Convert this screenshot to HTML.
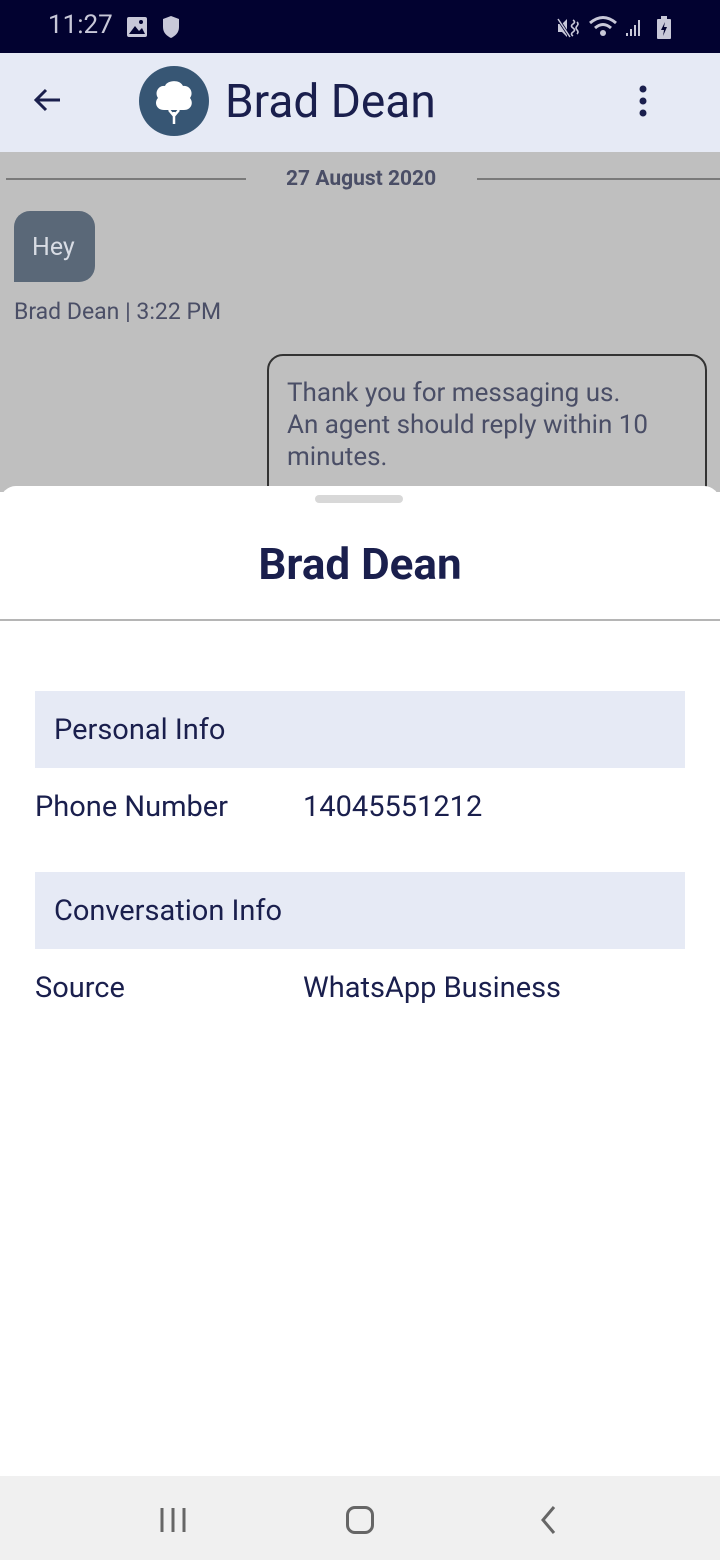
<!DOCTYPE html>
<html><head><meta charset="utf-8"><style>
*{margin:0;padding:0;box-sizing:border-box}
body{width:720px;height:1560px;position:relative;overflow:hidden;font-family:"Roboto","Liberation Sans",sans-serif;background:#fff}
.abs{position:absolute}
</style></head><body>
<div class="abs" style="left:0;top:0;width:720px;height:53px;background:#020230"></div>
<div class="abs" style="left:48px;top:10px;font-size:26px;color:#c8c8d8">11:27</div>
<svg class="abs" style="left:126px;top:16px" width="22" height="22"><rect x="1" y="1" width="20" height="20" rx="2" fill="#c8c8d8"/><path d="M3 18 L9 10 L13 15 L16 12 L19 18Z" fill="#020230"/><circle cx="15" cy="6" r="2" fill="#020230"/></svg>
<svg class="abs" style="left:162px;top:15px" width="18" height="24"><path d="M9 1 L17 4 V12 C17 18 13 21 9 23 C5 21 1 18 1 12 V4Z" fill="#c8c8d8"/></svg>
<svg class="abs" style="left:556px;top:16px" width="26" height="24"><path d="M2 8 H6 L11 3 V21 L6 16 H2Z" fill="#c8c8d8"/><path d="M2 3 L14 21" stroke="#020230" stroke-width="3"/><path d="M2 3 L14 21" stroke="#c8c8d8" stroke-width="1.5"/><path d="M17 4 q3 2 0 4 q-3 2 0 4 q3 2 0 4 q-3 2 0 4 M21 6 q2 2 0 4 q-2 2 0 4 q2 2 0 4" stroke="#c8c8d8" stroke-width="1.6" fill="none"/></svg>
<svg class="abs" style="left:588px;top:14px" width="32" height="26"><path d="M2 9 Q15 -2 28 9" stroke="#c8c8d8" stroke-width="3" fill="none"/><path d="M7 14 Q15 7 23 14" stroke="#c8c8d8" stroke-width="3" fill="none"/><circle cx="15" cy="19" r="3" fill="#c8c8d8"/></svg>
<svg class="abs" style="left:624px;top:18px" width="20" height="20"><path d="M2 18h2v-3h-2zM6 18h2v-7h-2zM10 18h2v-11h-2zM14 18h2v-16h-2z" fill="#c8c8d8"/></svg>
<svg class="abs" style="left:656px;top:16px" width="16" height="24"><rect x="1" y="3" width="14" height="20" rx="1" fill="#c8c8d8"/><rect x="5" y="0" width="6" height="3" fill="#c8c8d8"/><path d="M9 6 L5 14 H8 L7 20 L11 11 H8Z" fill="#020230"/></svg>

<div class="abs" style="left:0;top:53px;width:720px;height:99px;background:#e6eaf5"></div>
<svg class="abs" style="left:32px;top:86px" width="32" height="28"><path d="M28 14 H4 M14 4 L4 14 L14 24" stroke="#1a1f4d" stroke-width="3" fill="none"/></svg>
<div class="abs" style="left:139px;top:66px;width:70px;height:70px;border-radius:50%;background:#375674"></div>
<svg class="abs" style="left:150px;top:76px" width="48" height="50"><path d="M24 36 L24 48 M24 40 L19 34 M24 40 L29 34" stroke="#fff" stroke-width="2.5" fill="none"/><path d="M14 34 C6 34 4 26 8 22 C4 16 9 9 15 10 C17 4 30 3 33 10 C40 9 44 17 40 22 C44 27 41 34 34 34Z" fill="#fff"/></svg>
<div class="abs" style="left:225px;top:75px;font-size:46px;color:#1a1f4d">Brad Dean</div>
<svg class="abs" style="left:636px;top:84px" width="14" height="34"><circle cx="7" cy="5" r="3.5" fill="#1a1f4d"/><circle cx="7" cy="17" r="3.5" fill="#1a1f4d"/><circle cx="7" cy="29" r="3.5" fill="#1a1f4d"/></svg>

<div class="abs" style="left:0;top:152px;width:720px;height:340px;background:#bfbfbf"></div>
<div class="abs" style="left:6px;top:178px;width:240px;height:2px;background:#7a7a7a"></div>
<div class="abs" style="left:477px;top:178px;width:243px;height:2px;background:#7a7a7a"></div>
<div class="abs" style="left:286px;top:167px;font-size:21px;font-weight:bold;color:#4a4e66">27 August 2020</div>
<div class="abs" style="left:14px;top:211px;width:81px;height:71px;background:#5a6878;border-radius:16px 16px 16px 0"></div>
<div class="abs" style="left:32px;top:233px;font-size:25px;color:#d8dce4">Hey</div>
<div class="abs" style="left:14px;top:298px;font-size:23px;color:#4a4e66">Brad Dean | 3:22 PM</div>
<div class="abs" style="left:267px;top:354px;width:440px;height:150px;border:2px solid #333;border-radius:16px"></div>
<div class="abs" style="left:287px;top:377px;font-size:26px;line-height:32px;color:#4a4e66">Thank you for messaging us.<br>An agent should reply within 10<br>minutes.</div>

<div class="abs" style="left:0;top:486px;width:720px;height:990px;background:#fff;border-radius:16px 16px 0 0"></div>
<div class="abs" style="left:315px;top:495px;width:88px;height:8px;border-radius:4px;background:#d8d8d8"></div>
<div class="abs" style="left:0;top:538px;width:720px;text-align:center;font-size:44px;font-weight:bold;color:#1a1f4d">Brad Dean</div>
<div class="abs" style="left:0;top:619px;width:720px;height:2px;background:#b5b5b5"></div>
<div class="abs" style="left:35px;top:691px;width:650px;height:77px;background:#e6eaf5"></div>
<div class="abs" style="left:54px;top:713px;font-size:29px;color:#1a1f4d">Personal Info</div>
<div class="abs" style="left:35px;top:790px;font-size:29px;color:#1a1f4d">Phone Number</div>
<div class="abs" style="left:303px;top:790px;font-size:29px;color:#1a1f4d">14045551212</div>
<div class="abs" style="left:35px;top:872px;width:650px;height:77px;background:#e6eaf5"></div>
<div class="abs" style="left:54px;top:894px;font-size:29px;color:#1a1f4d">Conversation Info</div>
<div class="abs" style="left:35px;top:971px;font-size:29px;color:#1a1f4d">Source</div>
<div class="abs" style="left:303px;top:971px;font-size:29px;color:#1a1f4d">WhatsApp Business</div>

<div class="abs" style="left:0;top:1476px;width:720px;height:84px;background:#f0f0f0"></div>
<svg class="abs" style="left:158px;top:1506px" width="30" height="28"><path d="M4 2v24M15 2v24M26 2v24" stroke="#666" stroke-width="3"/></svg>
<div class="abs" style="left:346px;top:1506px;width:28px;height:28px;border:3px solid #666;border-radius:9px"></div>
<svg class="abs" style="left:538px;top:1504px" width="20" height="32"><path d="M16 3 L5 16 L16 29" stroke="#666" stroke-width="3" fill="none"/></svg>
</body></html>
